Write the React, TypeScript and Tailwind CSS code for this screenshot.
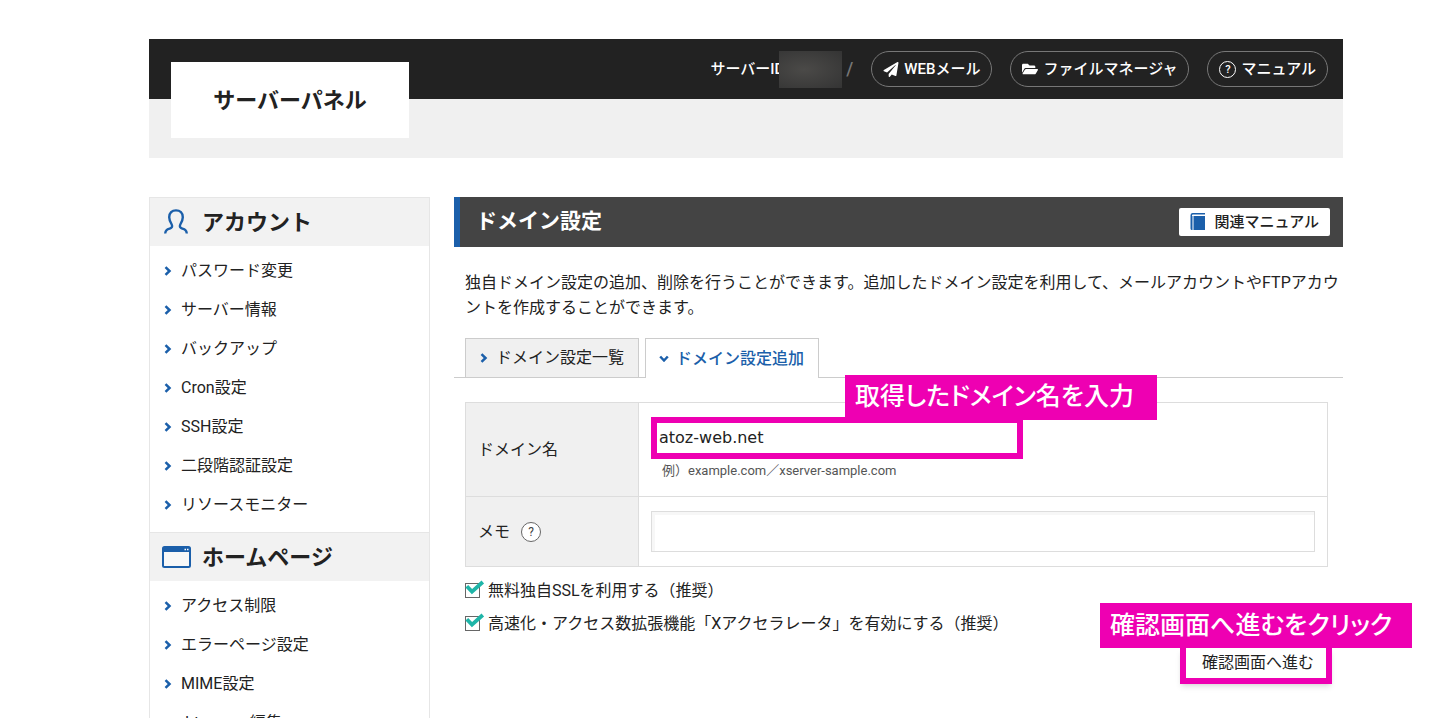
import React from 'react';
import { FaFolderOpen, FaPaperPlane } from 'react-icons/fa';

interface MenuGroup {
  title: string;
  icon: React.ReactNode;
  items: string[];
}

const UserIcon: React.FC = () => (
  <svg viewBox="0 0 24 26" className="h-[26px] w-6" fill="none" stroke="#1b5faa" strokeWidth="2.4">
    <path d="M1.200 24.500c.3-3.500 2-4 4.500-4.800 2.300-.8 3-2.200 2-4.200C6.200 13 5.200 11 5.200 8.200c0-4.400 2.800-6.800 6.800-6.800s6.800 2.400 6.800 6.800c0 2.800-1 4.800-2.500 7.300-1 2-.3 3.400 2 4.200 2.500.8 4.200 1.300 4.500 4.800" />
  </svg>
);

const WindowIcon: React.FC = () => (
  <svg viewBox="0 0 29 22" className="h-[22px] w-[29px]">
    <rect x="1" y="1" width="27" height="20" rx="1.500" fill="#f8f8f8" stroke="#1b5faa" strokeWidth="2" />
    <path d="M1 1h27v5H1z" fill="#1b5faa" />
    <path d="M22.500 3.500h1.500M25 3.500h1.500" stroke="#fff" strokeWidth="1.500" />
  </svg>
);

const BookIcon: React.FC = () => (
  <svg viewBox="0 0 16 18" className="h-[18px] w-4" fill="#1b5faa">
    <path d="M2.500 0H15v1.500H3a1 1 0 0 0-1 1V17a1.500 1.500 0 0 1-1.500-1.500v-13A2.300 2.300 0 0 1 2.500 0z" />
    <path d="M3.500 3H15v14H3.500z" />
    <path d="M1 3h1.500v14H2z" />
  </svg>
);

const Chevron: React.FC<{ down?: boolean }> = ({ down = false }) => (
  <svg
    viewBox="0 0 8 10"
    className={down ? 'h-[10px] w-2 shrink-0 rotate-90' : 'h-[10px] w-2 shrink-0'}
    fill="none"
    stroke="#1b5faa"
    strokeWidth="2.5"
  >
    <path d="M1.500 1.200 5.500 5l-4 3.800" />
  </svg>
);

const QuestionIcon: React.FC<{ className: string }> = ({ className }) => (
  <span className={`flex items-center justify-center rounded-full border leading-none ${className}`}>?</span>
);

const menuGroups: MenuGroup[] = [
  {
    title: 'アカウント',
    icon: <UserIcon />,
    items: [
      'パスワード変更',
      'サーバー情報',
      'バックアップ',
      'Cron設定',
      'SSH設定',
      '二段階認証設定',
      'リソースモニター',
    ],
  },
  {
    title: 'ホームページ',
    icon: <WindowIcon />,
    items: ['アクセス制限', 'エラーページ設定', 'MIME設定', '.htaccess編集'],
  },
];

const headerLinks = [
  { label: 'WEBメール', icon: <FaPaperPlane className="h-[15px] w-4" /> },
  { label: 'ファイルマネージャ', icon: <FaFolderOpen className="h-4 w-4" /> },
  { label: 'マニュアル', icon: <QuestionIcon className="h-[17px] w-[17px] border-white text-[11px]" /> },
];

const Header: React.FC = () => (
  <header className="relative bg-[#f0f0f0] pb-[59px]">
    <div className="flex h-[60px] items-center justify-end bg-[#222] pr-[15px] text-[15px] font-medium text-white">
      <span>サーバーID</span>
      <span className="relative -ml-[5px] h-[37px] w-[63px] bg-radial-[at_40%_50%] from-[#4b4a48] to-[#343434]" />
      <span className="mr-[18px] ml-1 text-lg text-[#777]">/</span>
      <nav className="flex gap-[18px]">
        {headerLinks.map((link) => (
          <a
            key={link.label}
            href="#"
            className="flex h-9 items-center gap-[5px] rounded-full border border-[#777] px-[11px]"
          >
            {link.icon}
            {link.label}
          </a>
        ))}
      </nav>
    </div>
    <h1 className="absolute top-[23px] left-[22px] flex h-[76px] w-[238px] items-center justify-center bg-white text-[22px] font-bold">
      サーバーパネル
    </h1>
  </header>
);

const Sidebar: React.FC = () => (
  <aside className="w-[281px] shrink-0 border-x border-[#e6e6e6]">
    {menuGroups.map((group) => (
      <section key={group.title}>
        <h2 className="flex h-[49px] items-center border-t border-[#e6e6e6] bg-[#f2f2f2] text-[22px] font-bold">
          <span className="flex w-[52px] justify-center">{group.icon}</span>
          {group.title}
        </h2>
        <ul className="pt-[5px] pb-2">
          {group.items.map((item) => (
            <li key={item}>
              <a href="#" className="flex h-[39px] items-center gap-[9px] pl-[14px]">
                <Chevron />
                {item}
              </a>
            </li>
          ))}
        </ul>
      </section>
    ))}
  </aside>
);

const Callout: React.FC<{ text: string; className: string }> = ({ text, className }) => (
  <div
    className={`absolute z-10 flex h-[45px] w-[312px] items-center bg-[#ee00b2] pl-[10px] text-[25px] font-medium whitespace-nowrap text-white [font-feature-settings:'palt'] ${className}`}
  >
    {text}
  </div>
);

const Option: React.FC<{ id: string; label: string }> = ({ id, label }) => (
  <div className="flex h-[33px] items-center">
    <span className="relative flex">
      <input
        id={id}
        type="checkbox"
        defaultChecked
        className="h-[15px] w-[15px] appearance-none border border-[#666] bg-white"
      />
      <svg
        viewBox="0 0 20 16"
        className="pointer-events-none absolute -top-1 left-0 h-4 w-5"
        fill="none"
        stroke="#1fb5a8"
        strokeWidth="3.8"
      >
        <path d="M1.800 7.200 7 12.600 17.800 3" />
      </svg>
    </span>
    <label htmlFor={id} className="pl-2">
      {label}
    </label>
  </div>
);

const DomainForm: React.FC = () => (
  <form className="pt-6 pr-[15px] pl-[11px]" onSubmit={(e) => e.preventDefault()}>
    <table className="w-full border-collapse border border-[#ddd]">
      <tbody>
        <tr className="h-[94px] border-b border-[#ddd]">
          <th className="w-[173px] border-r border-[#ddd] bg-[#f0f0f0] pl-3 text-left font-normal">
            <label htmlFor="domain">ドメイン名</label>
          </th>
          <td className="px-3">
            <div className="relative w-[372px]">
              <input
                id="domain"
                type="text"
                defaultValue="atoz-web.net"
                className="block h-[42px] w-full border-6 border-[#ee00b2] bg-white pl-[2px] font-['DejaVu_Sans'] text-base outline-none"
              />
              <Callout text="取得したドメイン名を入力" className="bottom-full left-[194px] -mb-[3px]" />
            </div>
            <p className="pl-[11px] text-[13px] leading-6 text-[#555]">例）example.com／xserver-sample.com</p>
          </td>
        </tr>
        <tr className="h-[70px]">
          <th className="border-r border-[#ddd] bg-[#f0f0f0] pl-3 text-left font-normal">
            <div className="flex items-center gap-[11px]">
              <label htmlFor="memo">メモ</label>
              <QuestionIcon className="h-5 w-5 border-[#666] bg-white text-[12px] text-[#444]" />
            </div>
          </th>
          <td className="px-3">
            <input
              id="memo"
              type="text"
              className="block h-[41px] w-full border border-[#ddd] bg-white px-2 shadow-[inset_3px_3px_0_#f7f7f7] outline-none"
            />
          </td>
        </tr>
      </tbody>
    </table>
    <div className="pt-[7px]">
      <Option id="ssl" label="無料独自SSLを利用する（推奨）" />
      <Option id="accelerator" label="高速化・アクセス数拡張機能「Xアクセラレータ」を有効にする（推奨）" />
    </div>
    <div className="-mr-1 flex justify-end pt-2">
      <div className="relative">
        <button
          type="submit"
          className="flex h-9 w-[152px] items-center justify-center border-6 border-t-0 border-[#ee00b2] bg-white pl-1 shadow-md"
        >
          確認画面へ進む
        </button>
        <Callout text="確認画面へ進むをクリック" className="-right-20 bottom-full" />
      </div>
    </div>
  </form>
);

const App: React.FC = () => {
  return (
    <div className="h-screen overflow-hidden bg-white pt-[39px] pr-[107px] pl-[149px] font-['Roboto','Noto_Sans_CJK_JP',sans-serif] text-base text-[#222]">
      <Header />
      <div className="flex items-start gap-6 pt-[39px]">
        <Sidebar />
        <main className="min-w-0 flex-1">
          <div className="flex h-[50px] items-center justify-between border-l-6 border-[#1b5faa] bg-[#444] pr-[13px] pl-4">
            <h2 className="text-[21px] font-bold text-white">ドメイン設定</h2>
            <a
              href="#"
              className="flex h-7 items-center gap-2 rounded-xs bg-white px-[11px] text-[15px] font-medium"
            >
              <BookIcon />
              関連マニュアル
            </a>
          </div>
          <p className="pt-[23px] pb-[18px] pl-[11px] leading-[25px]">
            独自ドメイン設定の追加、削除を行うことができます。追加したドメイン設定を利用して、メールアカウントやFTPアカウントを作成することができます。
          </p>
          <div className="flex h-10 gap-[6px] border-b border-[#ccc] pl-[11px]">
            <button
              type="button"
              className="flex h-10 w-[174px] items-center justify-center gap-2 border border-[#ccc] bg-[#f0f0f0]"
            >
              <Chevron />
              ドメイン設定一覧
            </button>
            <button
              type="button"
              className="flex h-10 w-[174px] items-center justify-center gap-2 border border-b-0 border-[#ccc] bg-white font-medium text-[#1b5faa]"
            >
              <Chevron down />
              ドメイン設定追加
            </button>
          </div>
          <DomainForm />
        </main>
      </div>
    </div>
  );
};

export default App;
